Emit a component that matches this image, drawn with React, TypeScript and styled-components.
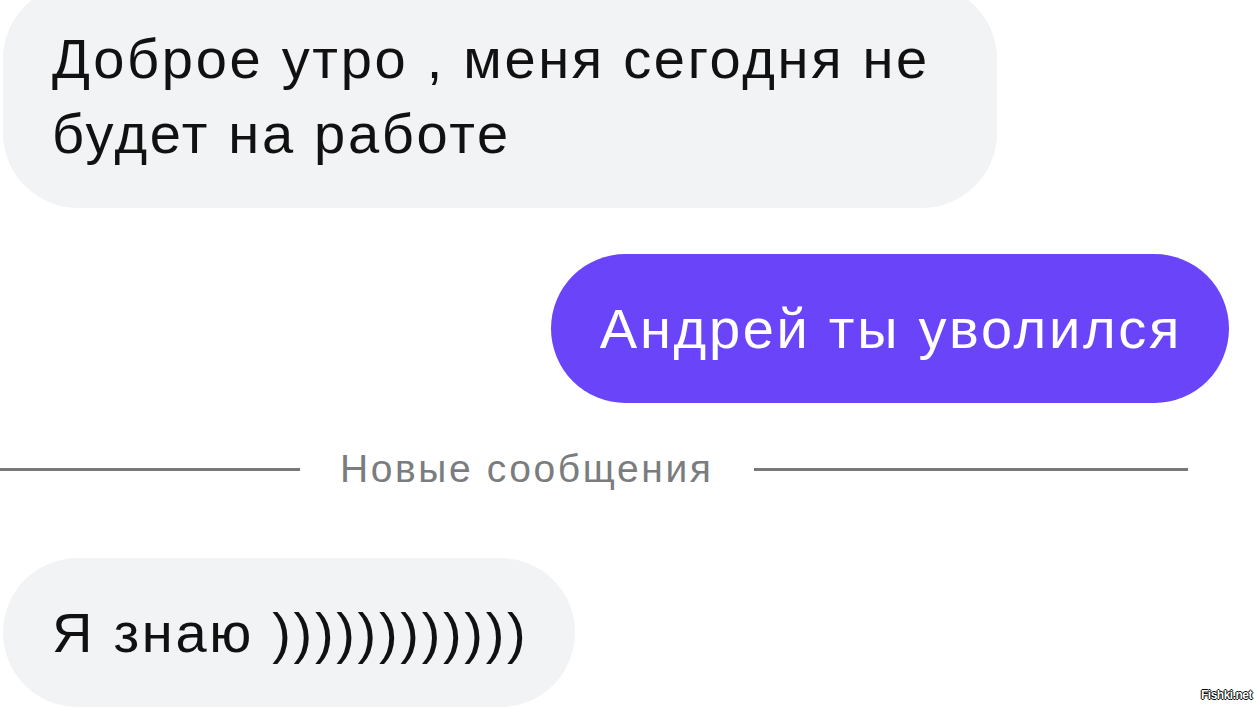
import styled, { createGlobalStyle } from "styled-components";

const GlobalStyle = createGlobalStyle`
  html, body {
    margin: 0;
    padding: 0;
    background: #ffffff;
  }
  body {
    font-family: "Liberation Sans", Arial, sans-serif;
  }
`;

export default function App(): JSX.Element {
  return (
    <>
      <GlobalStyle />
      <Screen>
        <Feed>
          <Row>
            <Bubble $wide>
              Доброе утро , меня сегодня не<br />будет на работе
            </Bubble>
          </Row>
          <Row $own>
            <Bubble $own>Андрей ты уволился</Bubble>
          </Row>
          <Divider>
            <DividerLine $width={300} />
            <DividerText>Новые сообщения</DividerText>
            <DividerLine $width={434} />
          </Divider>
          <Row>
            <Bubble>Я знаю ))))))))))))</Bubble>
          </Row>
        </Feed>
        <Watermark>Fishki.net</Watermark>
      </Screen>
    </>
  );
}

const Screen = styled.div`
  position: relative;
  width: 1257px;
  height: 708px;
  overflow: hidden;
  background: #ffffff;
`;

const Feed = styled.div`
  display: flex;
  flex-direction: column;
  margin-top: -16px;
`;

const Row = styled.div<{ $own?: boolean }>`
  display: flex;
  justify-content: ${(p) => (p.$own ? "flex-end" : "flex-start")};
  padding: 0 28px 0 3px;
  margin-top: ${(p) => (p.$own ? "46px" : "0")};
`;

const Bubble = styled.div<{ $own?: boolean; $wide?: boolean }>`
  box-sizing: border-box;
  width: ${(p) => (p.$wide ? "994px" : "auto")};
  padding: 37px 47px 37px 49px;
  border-radius: 75px;
  background: ${(p) => (p.$own ? "#6a44f9" : "#f2f3f5")};
  color: ${(p) => (p.$own ? "#ffffff" : "#111111")};
  font-size: 56px;
  line-height: 75px;
  letter-spacing: 2.7px;
  white-space: nowrap;
`;

const Divider = styled.div`
  display: flex;
  align-items: center;
  gap: 40px;
  height: 60px;
  margin: 36px 0 59px;
`;

const DividerLine = styled.div<{ $width: number }>`
  width: ${(p) => p.$width}px;
  height: 3px;
  background: #77787a;
`;

const DividerText = styled.span`
  color: #7b7c7e;
  font-size: 39px;
  line-height: 60px;
  letter-spacing: 2.6px;
`;

const Watermark = styled.span`
  position: absolute;
  right: 5px;
  bottom: 6px;
  font-family: "Liberation Sans", Arial, sans-serif;
  font-weight: bold;
  font-size: 12px;
  letter-spacing: -0.5px;
  color: #ffffff;
  text-shadow: 1px 0 0 #000, -1px 0 0 #000, 0 1px 0 #000, 0 -1px 0 #000;
`;
